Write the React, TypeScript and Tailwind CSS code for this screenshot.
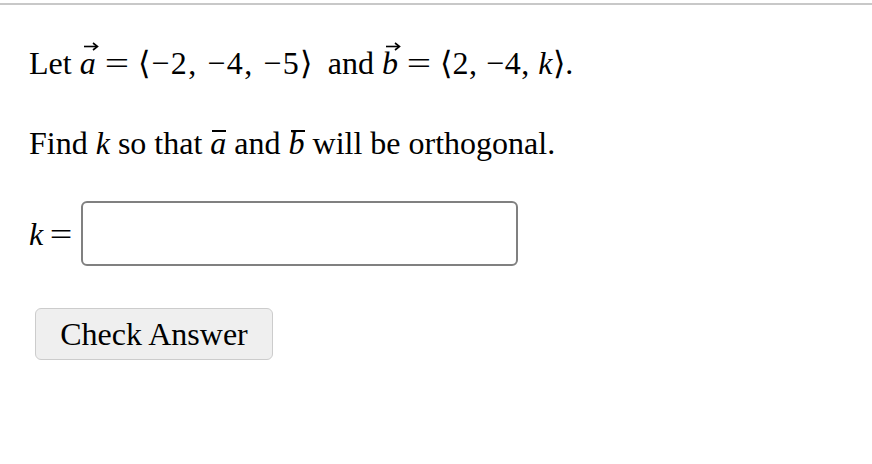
import React from "react";

const serif = { fontFamily: '"Liberation Serif", "Times New Roman", serif' };

// vector letter with a small arrow drawn above it
const VecArrow = ({ ch }: { ch: string }) => (
  <span className="relative inline-block italic">
    {ch}
    <svg
      className="absolute left-[3px] top-[-4px]"
      width="16"
      height="10"
      viewBox="0 0 16 10"
    >
      <path d="M1 5.5 H14" stroke="#000" strokeWidth="1.6" />
      <path d="M10 2 L14.5 5.5 L10 9" fill="none" stroke="#000" strokeWidth="1.6" />
    </svg>
  </span>
);

// letter with a bar over it
const VecBar = ({ ch }: { ch: string }) => (
  <span className="relative inline-block italic">
    {ch}
    <span className="absolute left-[2px] right-[0px] top-[5px] h-[2px] bg-black" />
  </span>
);

const Eq = () => (
  <span className="mx-[12px] inline-block scale-x-[1.35]">=</span>
);

export default function App() {
  return (
    <div className="w-[872px] h-[464px] bg-white text-black" style={serif}>
      <div className="h-[3px]" />
      <div className="h-[2px] bg-[#c8c8c8]" />
      <div className="pl-[29px] pt-[40px] text-[32px] leading-[36px]">
        <p className="whitespace-nowrap">
          Let <VecArrow ch="a" />
          <Eq />
          <span className="tracking-[1.5px]">⟨−2, −4, −5⟩</span>
          <span className="inline-block w-[6px]" /> and <VecArrow ch="b" />
          <Eq />
          <span className="tracking-[0.5px]">
            ⟨2, −4, <span className="italic">k</span>⟩.
          </span>
        </p>
        <p className="mt-[44px] whitespace-nowrap">
          Find <span className="italic">k</span> so that <VecBar ch="a" /> and{" "}
          <VecBar ch="b" /> will be orthogonal.
        </p>
        <div className="mt-[40px] flex items-center">
          <span className="w-[52px] whitespace-nowrap">
            <span className="italic">k</span>
            <span className="ml-[9px] inline-block scale-x-[1.25]">=</span>
          </span>
          <input
            className="h-[65px] w-[437px] rounded-[6px] border-2 border-[#808080] bg-white outline-none"
            type="text"
          />
        </div>
        <button className="mt-[42px] ml-[6px] h-[52px] w-[238px] rounded-[6px] border border-[#cccccc] bg-[#efefef] text-[32px] leading-[36px]">
          Check Answer
        </button>
      </div>
    </div>
  );
}
